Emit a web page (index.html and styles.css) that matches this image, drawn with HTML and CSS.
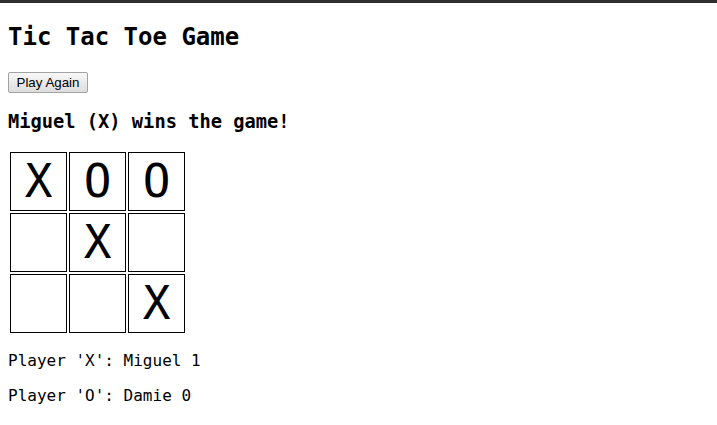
FILE: index.html
```html
<!DOCTYPE html>
<html>
<head>
<meta charset="utf-8">
<link rel="stylesheet" href="styles.css">
</head>
<body>
<h1 class="title">Tic Tac Toe Game</h1>
<button class="again">Play Again</button>
<h3 class="status">Miguel (X) wins the game!</h3>
<table class="board">
  <tr><td>X</td><td>O</td><td>O</td></tr>
  <tr><td></td><td>X</td><td></td></tr>
  <tr><td></td><td></td><td>X</td></tr>
</table>
<div class="scores">
  <p class="score">Player 'X': Miguel 1</p>
  <p class="score">Player 'O': Damie 0</p>
</div>
</body>
</html>
```
FILE: styles.css
```css
html {
  background: #fff;
}
body {
  margin: 0;
  padding: 0 8px;
  border-top: 3px solid #2e2e2e;
  font-family: "DejaVu Sans Mono", monospace;
  font-size: 16px;
  color: #000;
}
.title {
  font-size: 24px;
  font-weight: bold;
  margin: 20px 0 21px;
}
.again {
  display: block;
  font-family: "Liberation Sans", Arial, sans-serif;
  font-size: 13.33px;
  width: 80px;
  height: 21px;
  padding: 0;
  margin: 0;
  color: #000;
  background: linear-gradient(#f8f8f8, #dddddd);
  border: 1px solid #a3a3a3;
  border-radius: 2px;
}
.status {
  font-size: 18.72px;
  font-weight: bold;
  margin: 18px 0 18px;
}
.board {
  border-collapse: separate;
  border-spacing: 2px;
}
.board td {
  box-sizing: border-box;
  width: 57px;
  height: 59px;
  padding: 0;
  border: 1px solid #000;
  text-align: center;
  vertical-align: middle;
  font-size: 46px;
  line-height: 55px;
}
.scores {
  display: flex;
  flex-direction: column;
  gap: 16px;
  margin-top: 16px;
}
.score {
  margin: 0;
  line-height: 19px;
}
```
